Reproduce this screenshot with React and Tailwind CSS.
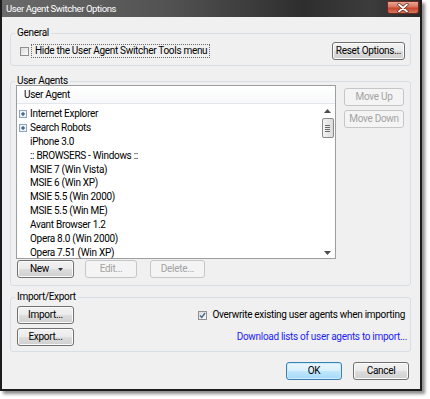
import React from "react";

const FONT = "font-['Roboto','Noto_Sans',sans-serif]";

function Btn({ children, className = "", disabled = false, focused = false }) {
  const base =
    "flex items-center justify-center rounded-[3px] border text-[10px] leading-none h-[18px] whitespace-nowrap";
  if (disabled) {
    return (
      <div className={`${base} border-[#c4c6c8] bg-[#f4f4f4] text-[#a3a3a3] ${className}`}>
        {children}
      </div>
    );
  }
  if (focused) {
    return (
      <div
        className={`${base} border-[#3c7fb1] bg-[linear-gradient(180deg,#eaf6fd_0%,#d9f0fc_48%,#bee6fd_52%,#a7d9f5_100%)] shadow-[inset_0_0_0_1px_#c8ecfb] text-black ${className}`}
      >
        {children}
      </div>
    );
  }
  return (
    <div
      className={`${base} border-[#707070] bg-[linear-gradient(180deg,#f2f2f2_0%,#ebebeb_48%,#dddddd_52%,#cfcfcf_100%)] shadow-[inset_0_0_0_1px_#fbfbfb] text-black ${className}`}
    >
      {children}
    </div>
  );
}

function CheckBox({ checked }) {
  return (
    <div className="w-[9px] h-[9px] border border-[#8f8f8f] bg-[linear-gradient(135deg,#dcdcdc,#fafafa)] flex items-center justify-center shrink-0">
      {checked && (
        <svg width="7" height="7" viewBox="0 0 7 7">
          <path d="M1 3.5 L2.8 5.5 L6 1" fill="none" stroke="#4a6a8a" strokeWidth="1.4" />
        </svg>
      )}
    </div>
  );
}

function PlusIcon() {
  return (
    <svg width="8" height="8" viewBox="0 0 8 8" className="shrink-0">
      <rect x="0.5" y="0.5" width="7" height="7" fill="#eef3f8" stroke="#8ea6bf" />
      <path d="M2 4 H6 M4 2 V6" stroke="#1c3a6e" strokeWidth="1" />
    </svg>
  );
}

const ROWS = [
  { t: "Internet Explorer", plus: true },
  { t: "Search Robots", plus: true },
  { t: "iPhone 3.0" },
  { t: ":: BROWSERS - Windows ::" },
  { t: "MSIE 7 (Win Vista)" },
  { t: "MSIE 6 (Win XP)" },
  { t: "MSIE 5.5 (Win 2000)" },
  { t: "MSIE 5.5 (Win ME)" },
  { t: "Avant Browser 1.2" },
  { t: "Opera 8.0 (Win 2000)" },
  { t: "Opera 7.51 (Win XP)" },
];

export default function App() {
  return (
    <div className={`w-[430px] h-[399px] bg-white ${FONT} text-black tracking-[-0.3px]`}>
      <div className="w-[422px] h-[391px] flex flex-col border-x-2 border-b-2 border-[#1c1c1c] bg-[#f0f0f0] shadow-[3px_3px_3px_rgba(0,0,0,0.45)]">
        {/* Title bar */}
        <div className="h-[17px] shrink-0 flex items-start justify-between bg-[linear-gradient(90deg,#6a6a6a_0%,#525252_40%,#2e2e2e_72%,#3c3c3c_88%,#2a2a2a_100%)]">
          <div className="pl-[4px] pt-[2px] text-[9.5px] leading-[13px] tracking-[-0.4px] text-white">
            User Agent Switcher Options
          </div>
          <div className="mt-[1px] mr-[1px] w-[32px] h-[13px] rounded-b-[3px] border border-[#6b2a1e] bg-[linear-gradient(180deg,#e9a794_0%,#d8735c_45%,#c4462c_55%,#d9765c_100%)] flex items-center justify-center">
            <svg width="12" height="10" viewBox="0 0 12 10">
              <path d="M2 1.5 L10 8.5 M10 1.5 L2 8.5" stroke="#5a2a22" strokeWidth="3.2" strokeLinecap="round" />
              <path d="M2 1.5 L10 8.5 M10 1.5 L2 8.5" stroke="#ffffff" strokeWidth="1.8" strokeLinecap="round" />
            </svg>
          </div>
        </div>

        {/* Content */}
        <div className="flex-1 flex flex-col pl-[8px] text-[10px]">
          {/* General */}
          <fieldset className="mt-[10px] w-[401px] border border-[#d5dfe5] rounded-[3px] p-0 pb-[5px]">
            <legend className="ml-[4px] px-[2px] leading-[12px]">General</legend>
            <div className="flex items-center justify-between pl-[9px] pr-[5px] pt-[3px]">
              <div className="flex items-center">
                <CheckBox />
                <div className="ml-[2px] h-[14px] flex items-center pl-[3px] pr-[2px] border border-dotted border-[#6a6a6a] leading-none whitespace-nowrap">
                  Hide the User Agent Switcher Tools menu
                </div>
              </div>
              <Btn className="w-[73px]">Reset Options...</Btn>
            </div>
          </fieldset>

          {/* User Agents */}
          <fieldset className="mt-[9px] w-[401px] border border-[#d5dfe5] rounded-[3px] p-0 pb-[7px]">
            <legend className="ml-[4px] px-[2px] leading-[12px]">User Agents</legend>
            <div className="flex pl-[5px] -mt-[2px]">
              <div className="flex flex-col">
                <div className="w-[320px] h-[174px] border border-[#9c9ea0] bg-white flex flex-col">
                  <div className="h-[18px] shrink-0 flex items-center pl-[7px] border-b border-[#e3e6ea] bg-[linear-gradient(180deg,#ffffff,#f7f8fa)]">
                    User Agent
                  </div>
                  <div className="flex flex-1">
                    <div className="flex-1 flex flex-col pt-[3px]">
                      {ROWS.map((r) => (
                        <div
                          key={r.t}
                          className={`h-[13.9px] flex items-center leading-none whitespace-nowrap ${r.plus ? "pl-[2px]" : "pl-[13px]"}`}
                        >
                          {r.plus && <PlusIcon />}
                          <span className={r.plus ? "ml-[3px]" : ""}>{r.t}</span>
                        </div>
                      ))}
                    </div>
                    <div className="w-[15px] flex flex-col items-center">
                      <div className="h-[14px] flex items-center justify-center">
                        <svg width="7" height="4" viewBox="0 0 7 4">
                          <path d="M0 4 L3.5 0 L7 4 Z" fill="#4d4d4d" />
                        </svg>
                      </div>
                      <div className="w-[12px] h-[20px] rounded-[2px] border border-[#8a8a8a] bg-[linear-gradient(90deg,#f4f4f4,#dcdcdc)] flex flex-col items-center justify-center gap-[1px]">
                        <div className="w-[5px] h-[1px] bg-[#6a6a6a]" />
                        <div className="w-[5px] h-[1px] bg-[#6a6a6a]" />
                        <div className="w-[5px] h-[1px] bg-[#6a6a6a]" />
                        <div className="w-[5px] h-[1px] bg-[#6a6a6a]" />
                      </div>
                      <div className="flex-1" />
                      <div className="h-[14px] flex items-center justify-center">
                        <svg width="7" height="4" viewBox="0 0 7 4">
                          <path d="M0 0 L3.5 4 L7 0 Z" fill="#4d4d4d" />
                        </svg>
                      </div>
                    </div>
                  </div>
                </div>
                <div className="flex mt-[1px] pl-[1px]">
                  <Btn className="w-[57px]">
                    <span className="ml-[2px]">New</span>
                    <svg width="5" height="3" viewBox="0 0 5 3" className="ml-[9px]">
                      <path d="M0 0 L2.5 3 L5 0 Z" fill="#333" />
                    </svg>
                  </Btn>
                  <Btn disabled className="ml-[11px] w-[52px]">Edit...</Btn>
                  <Btn disabled className="ml-[13px] w-[55px]">Delete...</Btn>
                </div>
              </div>
              <div className="ml-[8px] pt-[3px] flex flex-col">
                <Btn disabled className="w-[60px]">Move Up</Btn>
                <Btn disabled className="mt-[4px] w-[60px]">Move Down</Btn>
              </div>
            </div>
          </fieldset>

          {/* Import/Export */}
          <fieldset className="mt-[5px] w-[401px] border border-[#d5dfe5] rounded-[3px] p-0 pb-[5px]">
            <legend className="ml-[4px] px-[2px] leading-[12px]">Import/Export</legend>
            <div className="flex justify-between pl-[6px] pr-[5px] pt-[3px]">
              <div className="flex flex-col">
                <Btn className="w-[57px]">Import...</Btn>
                <Btn className="mt-[4px] w-[57px]">Export...</Btn>
              </div>
              <div className="flex flex-col items-end">
                <div className="mt-[3px] h-[12px] flex items-center">
                  <CheckBox checked />
                  <span className="ml-[6px] leading-none whitespace-nowrap">Overwrite existing user agents when importing</span>
                </div>
                <div className="mt-[10px] h-[12px] flex items-center leading-none text-[#1e1eff] mr-[-2px] whitespace-nowrap">
                  Download lists of user agents to import...
                </div>
              </div>
            </div>
          </fieldset>

          {/* OK / Cancel */}
          <div className="mt-[10px] w-[401px] flex justify-end pr-[2px]">
            <Btn focused className="w-[56px]">OK</Btn>
            <Btn className="ml-[11px] w-[56px]">Cancel</Btn>
          </div>
        </div>
      </div>
    </div>
  );
}
